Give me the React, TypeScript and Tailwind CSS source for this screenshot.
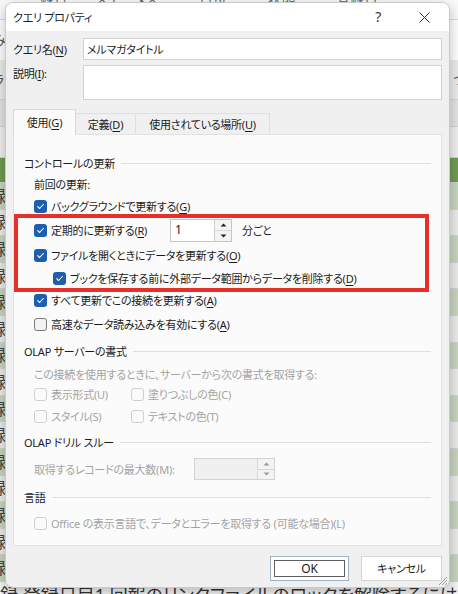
import React from "react";

function K({ c }: { c: string }) {
  return <span className="underline decoration-1 underline-offset-[2px]">{c}</span>;
}

function Check({ on, disabled }: { on?: boolean; disabled?: boolean }) {
  if (on) {
    return (
      <span className="flex h-[13px] w-[13px] shrink-0 items-center justify-center rounded-[3px] bg-[#1d5fae]">
        <svg width="9" height="9" viewBox="0 0 9 9">
          <path d="M1.7 4.7 3.6 6.5 7.3 2.5" fill="none" stroke="#fff" strokeWidth="1.1" strokeLinecap="round" strokeLinejoin="round" />
        </svg>
      </span>
    );
  }
  if (disabled) {
    return <span className="h-[13px] w-[13px] shrink-0 rounded-[3px] border border-[#cfcfcf] bg-[#fbfbfb]" />;
  }
  return <span className="h-[13px] w-[13px] shrink-0 rounded-[3px] border border-[#7b7b7b] bg-[#f2f2f2]" />;
}

function Arrows({ disabled }: { disabled?: boolean }) {
  const fill = disabled ? "#9a9a9a" : "#222";
  return (
    <div className={`flex w-[17px] flex-col border-l ${disabled ? "border-[#d8d8d8]" : "border-[#d0d0d0]"}`}>
      <div className="flex flex-1 items-center justify-center border-b border-[#d8d8d8] bg-[#f3f3f3]">
        <svg width="7" height="4" viewBox="0 0 7 4"><path d="M0.5 3.6 3.5 0.4 6.5 3.6Z" fill={fill} /></svg>
      </div>
      <div className="flex flex-1 items-center justify-center bg-[#f3f3f3]">
        <svg width="7" height="4" viewBox="0 0 7 4"><path d="M0.5 0.4 3.5 3.6 6.5 0.4Z" fill={fill} /></svg>
      </div>
    </div>
  );
}

function Section({ title, cls }: { title: string; cls: string }) {
  return (
    <div className={`flex items-center gap-[6px] pl-[10px] pr-[10px] text-[#1b1b1b] ${cls}`}>
      <span className="whitespace-nowrap">{title}</span>
      <span className="h-px flex-1 bg-[#dedede]" />
    </div>
  );
}

function Row({ cls, children }: { cls: string; children: React.ReactNode }) {
  return <div className={`flex items-center ${cls}`}>{children}</div>;
}

function Item({ on, disabled, children }: { on?: boolean; disabled?: boolean; children: React.ReactNode }) {
  return (
    <span className={`flex items-center gap-[4px] whitespace-nowrap ${disabled ? "text-[#a3a3a3]" : "text-[#1b1b1b]"}`}>
      <Check on={on} disabled={disabled} />
      <span>{children}</span>
    </span>
  );
}

function SheetRow({ cls, mark }: { cls: string; mark?: boolean }) {
  return (
    <div className={`flex items-center border-b border-[#d3d3d3] ${cls}`}>
      {mark ? <span className="ml-[-10px] text-[16px] leading-none text-[#444]">録</span> : null}
    </div>
  );
}

export default function App() {
  const greenRows = Array.from({ length: 15 }, (_, i) => i);
  return (
    <div className="relative h-[594px] w-[458px] overflow-hidden bg-[#f4f4f4] font-['Noto_Sans','Noto_Sans_CJK_JP',sans-serif] text-[11px] leading-none tracking-[-0.25px] [font-feature-settings:'palt']">
      {/* worksheet behind the dialog */}
      <div className="flex flex-col">
        <div className="flex h-[20px] items-start border-b border-[#dcdcdc] bg-[#fafafa] pl-[40px] text-[14px] text-[#666]">
          <span className="mt-[-8px]">録音　　ステータス　　　日付　　　状態　　　登録日</span>
        </div>
        <div className="flex h-[40px] items-center bg-[#ffffff] text-[14px] text-[#555]">
          <span className="ml-[-8px]">み</span>
        </div>
        <div className="flex h-[40px] items-center border-b border-[#d6d6d6] bg-[#ececec] text-[14px] text-[#555]">
          <span className="ml-[-8px]">ラ</span>
          <span className="ml-auto mr-[-8px]">つ</span>
        </div>
        <SheetRow cls="h-[27px] bg-[#e4e4e4]" />
        <SheetRow cls="h-[31px] bg-[#f0f0f0]" />
        <SheetRow cls="h-[25px] bg-[#6e9c53]" />
        {greenRows.map((i) => (
          <SheetRow key={i} mark cls={i % 2 === 0 ? "h-[26.6px] bg-[#c7d5be]" : "h-[26.6px] bg-[#ebebe9]"} />
        ))}
      </div>
      <div className="absolute left-0 top-[586px] whitespace-nowrap text-[18px] leading-none tracking-normal text-[#333]">
        録 登録日目1 回報のリンクファイルのロックを解除するには
      </div>

      {/* dialog window */}
      <div className="absolute left-[5px] top-[2px] flex h-[586px] w-[445px] flex-col overflow-hidden rounded-[8px] border border-[#c9c9c9] bg-[#f0f0f0] shadow-[0_4px_14px_rgba(0,0,0,0.25)]">
        {/* title bar */}
        <div className="flex h-[28px] shrink-0 items-center bg-[#ffffff] pl-[7px] text-[#1b1b1b]">
          <span>クエリ プロパティ</span>
          <span className="ml-auto mr-[38px] text-[14px] text-[#333]">?</span>
          <svg className="mr-[19px]" width="11" height="11" viewBox="0 0 11 11">
            <path d="M0.5 0.5 10.5 10.5M10.5 0.5 0.5 10.5" stroke="#333" strokeWidth="1" />
          </svg>
        </div>

        {/* name and description */}
        <div className="flex flex-col gap-[5px] px-[7px] pt-[7px] text-[#1b1b1b]">
          <div className="flex items-center">
            <span className="w-[70px]">クエリ名(<K c="N" />)</span>
            <div className="flex h-[22px] flex-1 items-center border border-[#d2d2d2] bg-[#ffffff] pl-[3px]">メルマガタイトル</div>
          </div>
          <div className="flex items-start">
            <span className="w-[70px] pt-[3px]">説明(<K c="I" />):</span>
            <div className="h-[35px] flex-1 border border-[#d2d2d2] bg-[#ffffff]" />
          </div>
        </div>

        {/* tabs */}
        <div className="mt-[9px] flex h-[26px] items-end px-[7px] text-[#1b1b1b]">
          <div className="relative z-10 flex h-[26px] w-[63px] items-center justify-center border border-b-0 border-[#d9d9d9] bg-[#fbfbfb]">
            使用(<K c="G" />)
          </div>
          <div className="flex h-[22px] w-[60px] items-center justify-center border-r border-t border-[#dedede] bg-[#f0f0f0]">
            定義(<K c="D" />)
          </div>
          <div className="flex h-[22px] w-[134px] items-center justify-center border-r border-t border-[#dedede] bg-[#f0f0f0]">
            使用されている場所(<K c="U" />)
          </div>
        </div>

        {/* tab panel */}
        <div className="relative mx-[7px] mt-[-1px] flex h-[412px] flex-col border border-[#e2e2e2] bg-[#fbfbfb] pt-[18px]">
          <Section title="コントロールの更新" cls="h-[20px]" />
          <Row cls="h-[22px] pl-[20px] text-[#1b1b1b]"><span>前回の更新:</span></Row>
          <Row cls="h-[22px] pl-[20px]">
            <Item on>バックグラウンドで更新する(<K c="G" />)</Item>
          </Row>
          <Row cls="h-[26px] pl-[20px]">
            <span className="w-[136px]">
              <Item on>定期的に更新する(<K c="R" />)</Item>
            </span>
            <div className="flex h-[23px] w-[62px] border border-[#c6c6c6] bg-[#ffffff]">
              <span className="flex flex-1 items-center pl-[4px] text-[12px] text-[#1b1b1b]">1</span>
              <Arrows />
            </div>
            <span className="ml-[10px] text-[#1b1b1b]">分ごと</span>
          </Row>
          <Row cls="h-[24px] pl-[20px]">
            <Item on>ファイルを開くときにデータを更新する(<K c="O" />)</Item>
          </Row>
          <Row cls="h-[22px] pl-[39px]">
            <Item on>ブックを保存する前に外部データ範囲からデータを削除する(<K c="D" />)</Item>
          </Row>
          <Row cls="h-[22px] pl-[20px]">
            <Item on>すべて更新でこの接続を更新する(<K c="A" />)</Item>
          </Row>
          <Row cls="h-[26px] pl-[20px]">
            <Item>高速なデータ読み込みを有効にする(<K c="A" />)</Item>
          </Row>

          <Section title="OLAP サーバーの書式" cls="h-[28px]" />
          <Row cls="h-[18px] pl-[20px] text-[#a3a3a3]">
            <span>この接続を使用するときに、サーバーから次の書式を取得する:</span>
          </Row>
          <Row cls="h-[22px] pl-[20px]">
            <span className="w-[97px]"><Item disabled>表示形式(U)</Item></span>
            <Item disabled>塗りつぶしの色(C)</Item>
          </Row>
          <Row cls="h-[22px] pl-[20px]">
            <span className="w-[97px]"><Item disabled>スタイル(S)</Item></span>
            <Item disabled>テキストの色(T)</Item>
          </Row>

          <Section title="OLAP ドリル スルー" cls="h-[31px]" />
          <Row cls="h-[22px] pl-[20px]">
            <span className="w-[160px] text-[#a3a3a3]">取得するレコードの最大数(M):</span>
            <div className="flex h-[22px] w-[81px] border border-[#d2d2d2] bg-[#f0f0f0]">
              <span className="flex-1" />
              <Arrows disabled />
            </div>
          </Row>

          <Section title="言語" cls="h-[34px]" />
          <Row cls="h-[18px] pl-[20px]">
            <Item disabled>Office の表示言語で、データとエラーを取得する (可能な場合)(L)</Item>
          </Row>

          {/* highlighted area */}
          <div className="pointer-events-none absolute left-[0px] top-[79px] h-[78px] w-[415px] border-[4px] border-[#e5312a]" />
        </div>

        {/* buttons */}
        <div className="mt-[10px] flex justify-end gap-[12px] px-[7px]">
          <button className="flex h-[25px] w-[79px] items-center justify-center border border-[#9fb2c6] bg-[#ffffff] text-[12px] text-[#1b1b1b] shadow-[inset_0_0_0_3px_#ffffff,inset_0_0_0_4px_#5e5e5e]">
            OK
          </button>
          <button className="flex h-[25px] w-[81px] items-center justify-center border border-[#d6d6d6] bg-[#ffffff] text-[#1b1b1b]">
            キャンセル
          </button>
        </div>

        {/* size grip */}
        <svg className="absolute bottom-[1px] right-[1px]" width="10" height="10" viewBox="0 0 10 10">
          <path d="M9 1 1 9M9 4 4 9M9 7 7 9" stroke="#9a9a9a" strokeWidth="1" />
        </svg>
      </div>
    </div>
  );
}
